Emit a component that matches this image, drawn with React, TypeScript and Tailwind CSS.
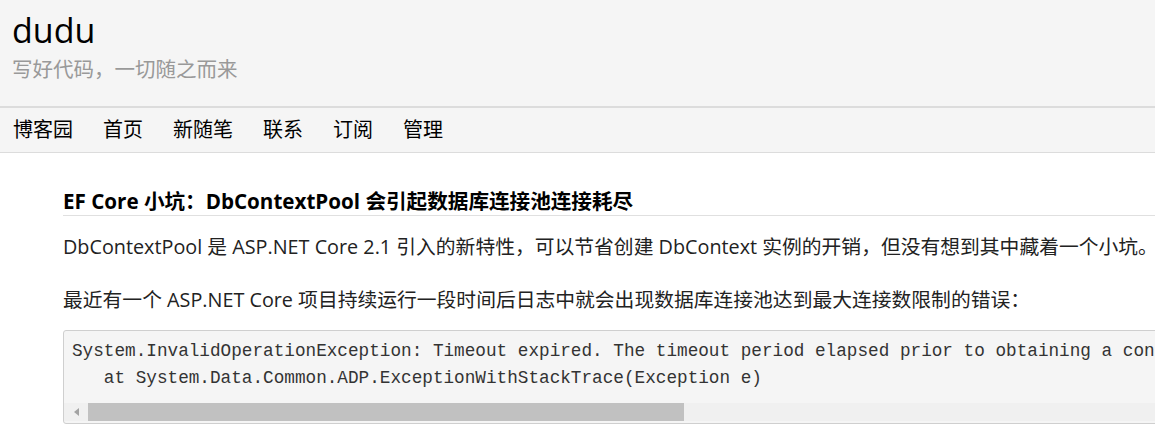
const navItems = ["博客园", "首页", "新随笔", "联系", "订阅", "管理"];

const sans = "font-['Open_Sans','Noto_Sans_CJK_SC',sans-serif]";

export default function App() {
  return (
    <div className={`w-[1155px] h-[426px] overflow-hidden bg-white text-[#222] ${sans}`}>
      {/* blog header */}
      <header className="h-[106px] bg-[#f5f5f5] pl-[12px] pt-[9px]">
        <h1 className="text-[34px] leading-[42px] text-black">dudu</h1>
        <p className="mt-[6px] text-[20.5px] leading-[24px] text-[#999]">写好代码，一切随之而来</p>
      </header>

      {/* nav */}
      <nav className="h-[47px] bg-[#f5f5f5] border-t-2 border-b border-[#dcdcdc] flex items-center gap-[30px] pl-[13px]">
        {navItems.map((item) => (
          <a key={item} className="text-[20px] leading-none text-black">
            {item}
          </a>
        ))}
      </nav>

      {/* post */}
      <main className="w-[1300px] pl-[63px]">
        <h2 className="mt-[36px] pb-[1px] border-b border-[#e0e0e0] text-[20.6px] leading-[25px] font-bold text-black">
          EF Core 小坑：DbContextPool 会引起数据库连接池连接耗尽
        </h2>
        <p className="mt-[18px] text-[19.8px] leading-[26px]">
          DbContextPool 是 ASP.NET Core 2.1 引入的新特性，可以节省创建 DbContext 实例的开销，但没有想到其中藏着一个小坑。
        </p>
        <p className="mt-[27px] text-[19.8px] leading-[26px]">
          最近有一个 ASP.NET Core 项目持续运行一段时间后日志中就会出现数据库连接池达到最大连接数限制的错误：
        </p>

        <div className="mt-[17px] w-[1150px] h-[94px] border border-[#cfcfcf] rounded-[3px] bg-[#f5f5f5] overflow-hidden flex flex-col">
          <pre className="pt-[7px] pl-[8px] font-['Liberation_Mono','Courier_New',monospace] text-[17.7px] leading-[27px] text-[#333] whitespace-pre">
            {"System.InvalidOperationException: Timeout expired. The timeout period elapsed prior to obtaining a connection from the pool.\n   at System.Data.Common.ADP.ExceptionWithStackTrace(Exception e)"}
          </pre>
          {/* horizontal scrollbar */}
          <div className="mt-auto mb-[2px] h-[18px] bg-[#f0f0f0] flex items-center">
            <div className="w-[24px] flex justify-center">
              <svg width="5" height="8" viewBox="0 0 5 8">
                <path d="M5 0 L0 4 L5 8 Z" fill="#a3a3a3" />
              </svg>
            </div>
            <div className="w-[596px] h-[18px] bg-[#c1c1c1]" />
          </div>
        </div>
      </main>
    </div>
  );
}
